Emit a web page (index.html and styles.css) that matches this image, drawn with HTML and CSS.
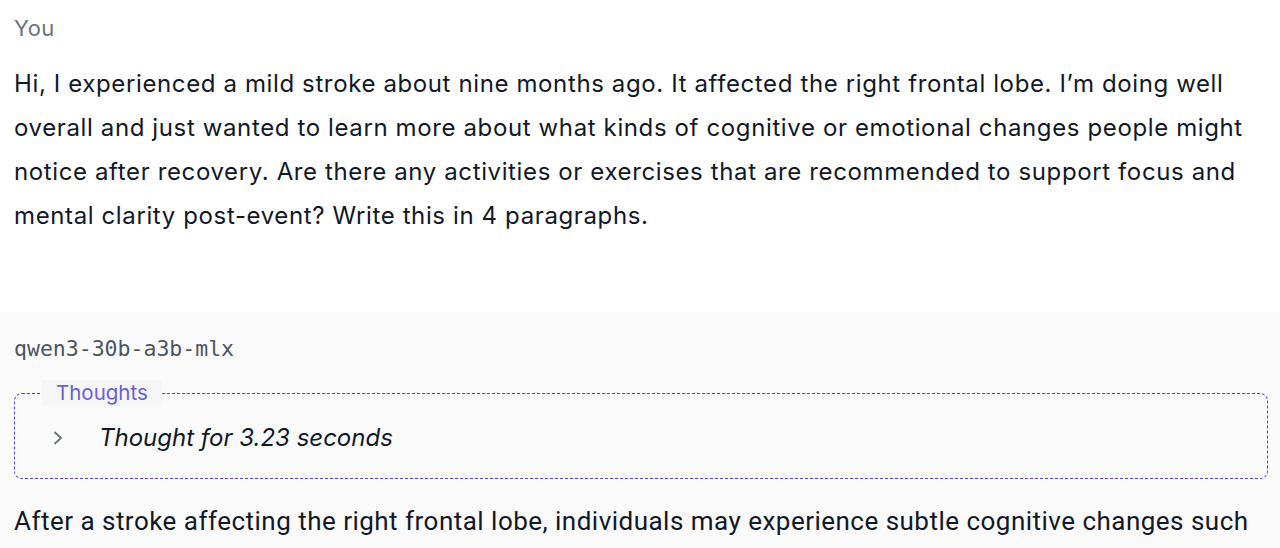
FILE: index.html
```html
<!DOCTYPE html>
<html lang="en">
<head>
    <meta charset="UTF-8">
    <meta name="viewport" content="width=device-width, initial-scale=1.0">
    <title>Chat</title>
    <link rel="stylesheet" href="styles.css">
</head>
<body>
    <div class="message user">
        <div class="author">You</div>
        <p class="text">Hi, I experienced a mild stroke about nine months ago. It affected the right frontal lobe. I’m doing well overall and just wanted to learn more about what kinds of cognitive or emotional changes people might notice after recovery. Are there any activities or exercises that are recommended to support focus and mental clarity post-event? Write this in 4 paragraphs.</p>
    </div>
    <div class="message assistant">
        <div class="model">qwen3-30b-a3b-mlx</div>
        <fieldset class="thoughts">
            <legend>Thoughts</legend>
            <div class="thoughts-toggle">
                <svg class="chevron" width="10" height="16" viewBox="0 0 10 16"><path d="M2 2.5 L8 8 L2 13.5" fill="none" stroke="#6b7280" stroke-width="1.8" stroke-linecap="round" stroke-linejoin="round"/></svg>
                <span>Thought for 3.23 seconds</span>
            </div>
        </fieldset>
        <p class="answer">After a stroke affecting the right frontal lobe, individuals may experience subtle cognitive changes such as difficulty with attention, planning, or emotional regulation.</p>
    </div>
</body>
</html>
```

FILE: styles.css
```css
* {
    box-sizing: border-box;
}
body {
    margin: 0;
    background: #ffffff;
    color: #111827;
    font-family: Inter, "Noto Sans", sans-serif;
}
.message {
    padding: 0 12px 0 14px;
}
.user {
    padding-top: 13px;
    padding-bottom: 74px;
}
.author {
    font-size: 22px;
    line-height: 30px;
    letter-spacing: 0.4px;
    color: #6b7280;
}
.text {
    margin: 19px 0 0;
    font-size: 24px;
    line-height: 44px;
    letter-spacing: 0.62px;
}
.assistant {
    background: #fafafa;
    padding-top: 24px;
    height: 300px;
}
.model {
    font-family: "DejaVu Sans Mono", monospace;
    font-size: 21.5px;
    line-height: 26px;
    color: #4b5563;
}
.thoughts {
    margin: 18px 0 0;
    border: 1px dashed #4f46e5;
    border-radius: 8px;
    padding: 16px 30px 24px 38px;
}
.thoughts legend {
    color: #6a5fd8;
    font-size: 20.5px;
    line-height: 26px;
    padding: 0 14px;
    margin-left: -11px;
    background: #f6f6f6;
}
.thoughts-toggle {
    display: flex;
    align-items: center;
    gap: 36px;
}
.thoughts-toggle span {
    font-style: italic;
    font-size: 24px;
    line-height: 32px;
}
.answer {
    margin: 20px 0 0;
    font-family: Roboto, sans-serif;
    font-size: 26px;
    line-height: 44px;
    letter-spacing: 0.48px;
}
```
